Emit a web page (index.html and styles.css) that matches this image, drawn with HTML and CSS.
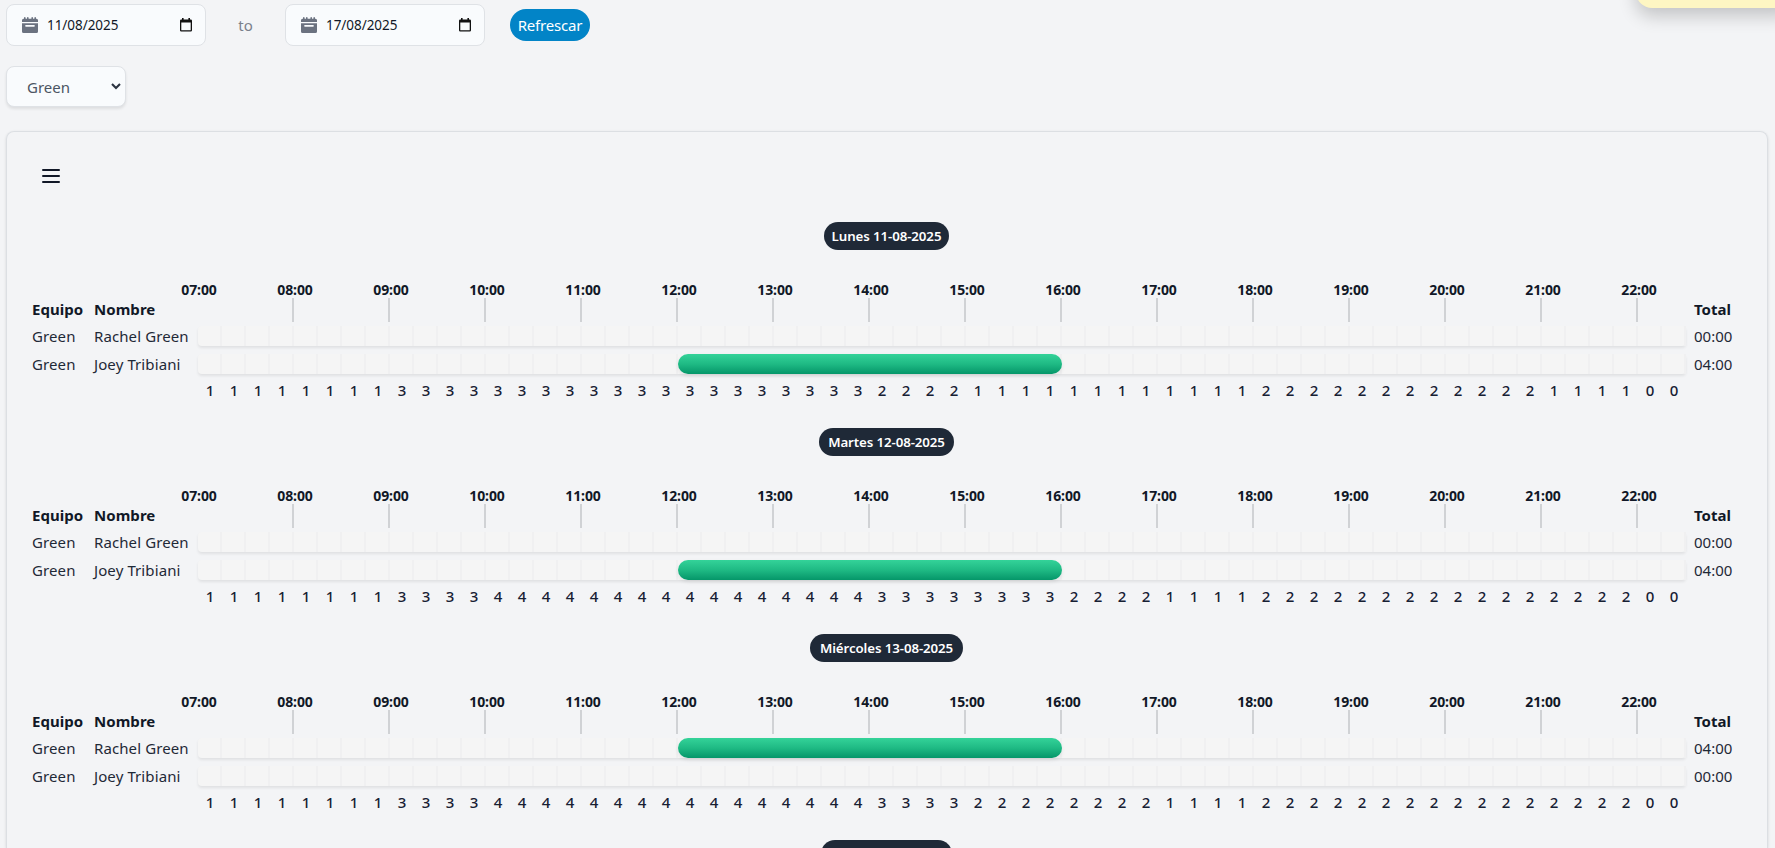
FILE: index.html
```html
<!DOCTYPE html>
<html lang="es">
<head>
<meta charset="utf-8">
<title>Turnos</title>
<link rel="stylesheet" href="styles.css">
</head>
<body>
<svg class="defs" aria-hidden="true">
  <symbol id="cal-solid" viewBox="0 0 16 16">
    <path d="M0 5V3.2A1.5 1.5 0 0 1 1.5 1.7H2V.9a.8.8 0 0 1 1.600 0v.8H5V.9a.8.8 0 0 1 1.600 0v.8h2.800V.9a.8.8 0 0 1 1.600 0v.8h1.400V.9a.8.8 0 0 1 1.600 0v.8h.5A1.500 1.500 0 0 1 16 3.200V5z"/>
    <path fill-rule="evenodd" d="M0 6.300h16v8.200a1.500 1.500 0 0 1-1.500 1.500h-13A1.500 1.500 0 0 1 0 14.500zM4 8a.8.8 0 0 0 0 1.700h8A.8.8 0 0 0 12 8z"/>
  </symbol>
  <symbol id="cal-line" viewBox="0 0 12 14">
    <path fill-rule="evenodd" d="M1.300 1.400H2V0h1.600v1.400h4.800V0H10v1.400h.7A1.300 1.300 0 0 1 12 2.700v9.500a1.300 1.300 0 0 1-1.300 1.300H1.300A1.300 1.300 0 0 1 0 12.200V2.700a1.300 1.300 0 0 1 1.300-1.300zM1.300 4.600v7.600h9.400V4.600z"/>
  </symbol>
</svg>
<div class="toast"></div>
<div class="toolbar">
  <div class="date"><svg class="date-lead"><use href="#cal-solid"/></svg><span class="date-value">11/08/2025</span><svg class="date-pick"><use href="#cal-line"/></svg></div>
  <span class="to">to</span>
  <div class="date"><svg class="date-lead"><use href="#cal-solid"/></svg><span class="date-value">17/08/2025</span><svg class="date-pick"><use href="#cal-line"/></svg></div>
  <button class="refresh">Refrescar</button>
</div>
<div class="team">
  <span>Green</span>
  <svg class="chevron" viewBox="0 0 10 7"><path d="M1 1l4 4 4-4"/></svg>
</div>
<main class="card">
  <div class="burger"><i></i><i></i><i></i></div>
  <div id="days"></div>
</main>
<script src="app.js"></script>
</body>
</html>
```
FILE: styles.css
```css
* { box-sizing: border-box; }
body {
  margin: 0;
  height: 848px;
  overflow: hidden;
  padding: 4px 8px 0 6px;
  background: #f3f4f6;
  color: #1f2937;
  font: 15px/20px "Noto Sans", sans-serif;
}
.defs { position: absolute; width: 0; height: 0; }
.toast {
  position: absolute;
  top: -60px;
  right: -20px;
  width: 159px;
  height: 68px;
  border-radius: 16px;
  background: #fef6c3;
  box-shadow: 0 8px 18px rgba(0, 0, 0, .2);
}
.toolbar { display: flex; align-items: center; height: 42px; }
.date {
  display: flex;
  align-items: center;
  width: 200px;
  height: 42px;
  padding: 0 13px 0 15px;
  border: 1px solid #dfe2e6;
  border-radius: 8px;
  background: #f9fbfd;
}
.date-lead { width: 16px; height: 16px; margin-right: 9px; fill: #6b7280; }
.date-value { flex: 1; font-size: 13.5px; color: #111827; letter-spacing: -.05px; }
.date-pick { width: 12px; height: 14px; fill: #111; }
.to { width: 79px; text-align: center; color: #7a808b; }
.refresh {
  height: 32px;
  width: 80px;
  margin-left: 25px;
  padding: 0;
  border: 0;
  border-radius: 16px;
  background: #0284c7;
  color: #fff;
  font: 15px/32px "Noto Sans", sans-serif;
  letter-spacing: -.2px;
}
.team {
  display: flex;
  align-items: center;
  justify-content: space-between;
  width: 120px;
  height: 41px;
  margin-top: 20px;
  padding: 1px 4px 0 20px;
  border: 1px solid #dfe2e6;
  border-radius: 8px;
  background: #f9fbfd;
  color: #4b5563;
  box-shadow: 0 2px 3px rgba(0, 0, 0, .09);
}
.chevron { width: 10px; height: 7px; margin-top: -2px; fill: none; stroke: #2b3340; stroke-width: 2.1; }
.card {
  width: 1762px;
  height: 717px;
  margin-top: 24px;
  padding: 37px 26px 0 25px;
  border: 1px solid #dcdfe3;
  border-bottom: 0;
  border-radius: 8px 8px 0 0;
  box-shadow: 0 1px 3px rgba(0, 0, 0, .12);
}
.burger { display: flex; flex-direction: column; gap: 4px; width: 18px; margin-left: 10px; }
.burger i { height: 2px; border-radius: 1px; background: #111827; }
#days { height: 665px; padding-top: 39px; overflow: hidden; }
.day { height: 206px; }
.pill {
  display: block;
  height: 28px;
  margin: 0 auto;
  border-radius: 14px;
  background: #1f2937;
  color: #fff;
  font-size: 13.3px;
  font-weight: 600;
  line-height: 28px;
  text-align: center;
  letter-spacing: -.1px;
  white-space: nowrap;
}
.grid {
  display: grid;
  grid-template-columns: 62px 104px 1488px 50px;
  grid-template-rows: 46px 28px 28px 25px;
  padding-top: 27px;
  white-space: nowrap;
}
.th { align-self: end; padding-bottom: 4px; color: #111827; font-weight: 700; letter-spacing: .05px; }
.cell { line-height: 26px; letter-spacing: .1px; }
.time { padding-left: 8px; letter-spacing: 0; }
.hours { display: grid; grid-template-columns: repeat(16, 96px); width: 1488px; }
.hour {
  display: flex;
  flex-direction: column;
  align-items: center;
  width: 46px;
  margin-left: -22px;
  color: #111827;
  font-size: 14px;
  font-weight: 700;
  height: 46px;
  padding-top: 4px;
  line-height: 17px;
  letter-spacing: -.1px;
}
.hour::after { content: ""; width: 2px; height: 24px; margin: 0 4px 0 0; background: #d0d2d5; }
.hour:first-child::after { background: none; }
.track {
  display: grid;
  grid-template-columns: repeat(62, 24px);
  height: 20px;
  margin-top: 3px;
  border-radius: 4px;
  background: #f5f5f5;
  box-shadow: 0 2px 3px rgba(0, 0, 0, .08);
}
.slot { grid-row: 1; border-right: 2px solid #f0f0f1; }
.bar {
  grid-row: 1;
  z-index: 1;
  border-radius: 10px;
  background: linear-gradient(#34d399, #1fba84 50%, #059669);
  box-shadow: 0 2px 4px rgba(0, 0, 0, .08);
}
.counts {
  display: grid;
  grid-template-columns: repeat(62, 24px);
  grid-column: 3;
  text-align: center;
  font-weight: 500;
  font-size: 15px;
  line-height: 23px;
  color: #172033;
}
```
FILE: app.js
```js
const run = pairs => pairs.flatMap(([value, times]) => Array(times).fill(value));

const days = [
  { name: 'Lunes 11-08-2025', width: 125, worker: 1,
    counts: run([[1, 8], [3, 20], [2, 4], [1, 12], [2, 12], [1, 4], [0, 2]]) },
  { name: 'Martes 12-08-2025', width: 135, worker: 1,
    counts: run([[1, 8], [3, 4], [4, 16], [3, 8], [2, 4], [1, 4], [2, 16], [0, 2]]) },
  { name: 'Miércoles 13-08-2025', width: 153, worker: 0,
    counts: run([[1, 8], [3, 4], [4, 16], [3, 4], [2, 8], [1, 4], [2, 16], [0, 2]]) },
  { name: '', width: 131 }
];
const people = ['Rachel Green', 'Joey Tribiani'];

const hours = Array.from({ length: 16 }, (_, i) =>
  `<span class="hour">${String(i + 7).padStart(2, '0')}:00</span>`).join('');
const slots = Array.from({ length: 62 }, (_, i) =>
  `<i class="slot" style="grid-column:${i + 1}"></i>`).join('');

// A shift runs from 12:00 to 16:00, in quarter-hour slots counted from 07:00.
const shift = '<b class="bar" style="grid-column:21 / span 16"></b>';

const grid = day => `
    <div class="grid">
      <span class="th">Equipo</span><span class="th">Nombre</span>
      <div class="hours">${hours}</div><span class="th time">Total</span>
      ${people.map((person, i) => `
        <span class="cell">Green</span><span class="cell">${person}</span>
        <div class="track">${slots}${day.worker === i ? shift : ''}</div>
        <span class="cell time">${day.worker === i ? '04:00' : '00:00'}</span>`).join('')}
      <div class="counts">${day.counts.map(n => `<span>${n}</span>`).join('')}</div>
    </div>`;

document.getElementById('days').innerHTML = days.map(day => `
  <section class="day">
    <span class="pill" style="width:${day.width}px">${day.name}</span>
    ${day.counts ? grid(day) : ''}
  </section>`).join('');
```
